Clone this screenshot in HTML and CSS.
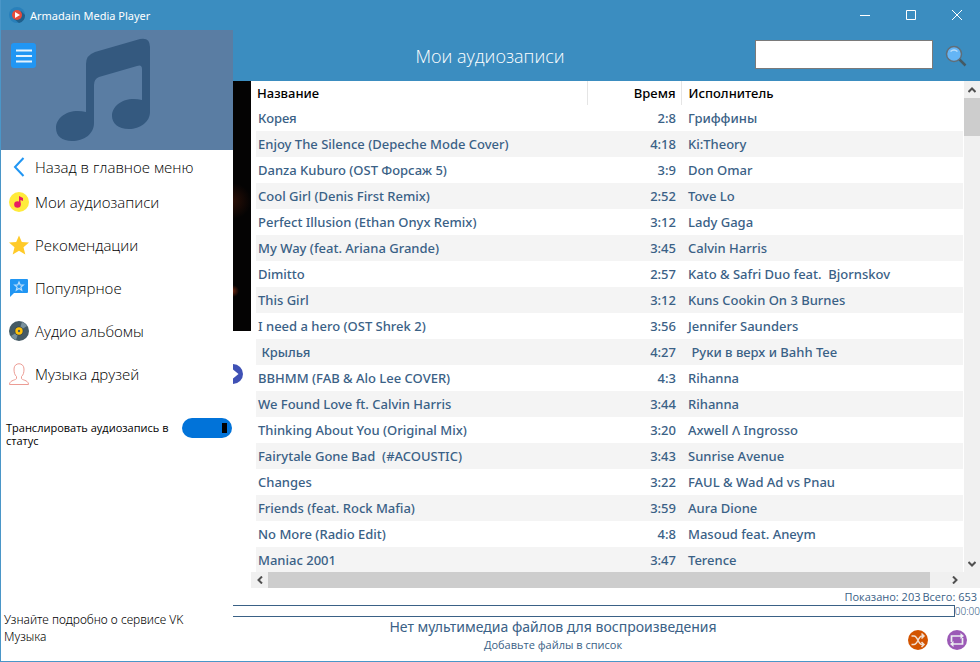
FILE: index.html
```html
<!DOCTYPE html>
<html lang="ru">
<head>
    <meta charset="UTF-8">
    <meta name="viewport" content="width=device-width, initial-scale=1.0">
    <title>Armadain Media Player</title>
    <link rel="stylesheet" href="styles.css">
</head>
<body>
    <div class="window">
        <!-- Title bar -->
        <header class="titlebar">
            <svg class="app-icon" viewBox="0 0 16 16">
                <circle cx="8" cy="8" r="8" fill="#2980ba"/>
                <path d="M5 12L12 4l4 4a8 8 0 0 1-6 8z" fill="#1f5f8b"/>
                <circle cx="8" cy="8" r="5" fill="#e64c3c"/>
                <path d="M6 5l5 3-5 3z" fill="#fff"/>
            </svg>
            <span class="app-name">Armadain Media Player</span>
            <button class="win-button" aria-label="Свернуть"><svg viewBox="0 0 10 10"><path d="M0 5.5h10"/></svg></button>
            <button class="win-button" aria-label="Развернуть"><svg viewBox="0 0 10 10"><path d="M.5.5h9v9h-9z"/></svg></button>
            <button class="win-button" aria-label="Закрыть"><svg viewBox="0 0 10 10"><path d="M0 0l10 10M10 0L0 10"/></svg></button>
        </header>

        <div class="layout">
            <!-- Side menu -->
            <aside class="sidebar">
                <div class="cover">
                    <button class="menu-button" aria-label="Меню">
                        <svg viewBox="0 0 26 26">
                            <rect width="25" height="25" rx="3" fill="#2196f3"/>
                            <path d="M5 7.5h16M5 13h16M5 18.5h16" stroke="#e3f2fd" stroke-width="2"/>
                        </svg>
                    </button>
                    <svg class="note" viewBox="0 0 94 104">
                        <path d="M30 26Q30 17 39 14L84 1Q94-1 94 9V74C94 84 84 91 73 91C62 91 56 85 56 78C56 67 69 58 86 62V31Q86 26 81 28L43 39Q38 41 38 47V85C38 96 28 103 16 103C6 103 0 98 0 90C0 79 13 70 30 74Z" fill="#34597f"/>
                    </svg>
                </div>
                <nav class="menu">
                    <a href="#" class="menu-item back">
                        <svg viewBox="0 0 20 20"><path d="M14.5 1L6 10l8.5 9" fill="none" stroke="#2196f3" stroke-width="2"/></svg>
                        Назад в главное меню
                    </a>
                    <a href="#" class="menu-item">
                        <svg viewBox="0 0 20 20">
                            <circle cx="10" cy="10" r="10" fill="#ffeb3b"/>
                            <circle cx="8.5" cy="12.5" r="3.3" fill="#e91e63"/>
                            <path d="M10 12.5V4l4 2v3l-2.500-1v4.500z" fill="#e91e63"/>
                        </svg>
                        Мои аудиозаписи
                    </a>
                    <a href="#" class="menu-item">
                        <svg viewBox="0 0 20 20"><path d="M10 .5l2.800 6.500 7.200.6-5.500 4.700 1.800 7.200L10 15.700l-6.300 3.800 1.800-7.200L0 7.600 7.200 7z" fill="#ffca28"/></svg>
                        Рекомендации
                    </a>
                    <a href="#" class="menu-item">
                        <svg viewBox="0 0 20 20">
                            <path d="M2 1h16q1 0 1 1v12q0 1-1 1H5l-4 4V2q0-1 1-1z" fill="#2196f3"/>
                            <path d="M10 4l1.200 2.900 3.100.2-2.400 2 .8 3.100-2.700-1.700-2.700 1.700.8-3.100-2.400-2 3.100-.2z" fill="none" stroke="#bbdefb" stroke-width="1.200"/>
                        </svg>
                        Популярное
                    </a>
                    <a href="#" class="menu-item">
                        <svg viewBox="0 0 20 20">
                            <circle cx="10" cy="10" r="10" fill="#455a64"/>
                            <path d="M10 10L13 1a9 9 0 0 1 5 4zM10 10L7 19a9 9 0 0 1-5-4z" fill="#78909c"/>
                            <circle cx="10" cy="10" r="4.500" fill="#37474f"/>
                            <circle cx="10" cy="10" r="3.700" fill="#ffc107"/>
                            <circle cx="10" cy="10" r="1.200" fill="#455a64"/>
                        </svg>
                        Аудио альбомы
                    </a>
                    <a href="#" class="menu-item">
                        <svg viewBox="0 0 20 22"><path d="M7.500 13.500C5.500 12 5 9 5 6c0-7 10-7 10 0 0 3-.5 6-2.500 7.500v2c0 1.500 6.500 1.500 7 5.500v.5H.5V21c.5-4 7-4 7-5.500z" fill="none" stroke="#ec9c94"/></svg>
                        Музыка друзей
                    </a>
                </nav>
                <div class="broadcast">
                    <label for="broadcast">Транслировать аудиозапись в статус</label>
                    <input type="checkbox" id="broadcast" class="switch" checked>
                </div>
                <a href="#" class="about">Узнайте подробно о сервисе VK Музыка</a>
            </aside>

            <main class="content">
                <div class="page-header">
                    <h1>Мои аудиозаписи</h1>
                    <input type="text" class="search-input" aria-label="Поиск">
                    <button class="search-button" aria-label="Найти">
                        <svg viewBox="0 0 22 22">
                            <path d="M14 14l6.500 6.500" stroke="#455a64" stroke-width="2.500"/>
                            <circle cx="9" cy="9" r="7.500" fill="#64b5f6" stroke="#616e78" stroke-width="1.500"/>
                            <path d="M5.500 6.500q3.500-3 7 0" fill="none" stroke="#bbdefb" stroke-width="1.500"/>
                        </svg>
                    </button>
                </div>

                <div class="workspace">
                    <div class="backdrop">
                        <div class="video"></div>
                        <button class="next-button" aria-label="Вперёд">
                            <svg viewBox="0 0 20 20">
                                <circle cx="10" cy="10" r="10" fill="#3f51b5"/>
                                <path d="M3 8.500h7V5.500l5.500 4.500-5.500 4.500v-3H3z" fill="#fff"/>
                            </svg>
                        </button>
                    </div>
                    <div class="tracks">
                        <table>
                            <thead>
                                <tr><th class="name">Название</th><th class="time">Время</th><th class="artist">Исполнитель</th></tr>
                            </thead>
                            <tbody>
                                <tr><td>Корея</td><td>2:8</td><td>Гриффины</td></tr>
                                <tr><td>Enjoy The Silence (Depeche Mode Cover)</td><td>4:18</td><td>Ki:Theory</td></tr>
                                <tr><td>Danza Kuburo (OST Форсаж 5)</td><td>3:9</td><td>Don Omar</td></tr>
                                <tr><td>Cool Girl (Denis First Remix)</td><td>2:52</td><td>Tove Lo</td></tr>
                                <tr><td>Perfect Illusion (Ethan Onyx Remix)</td><td>3:12</td><td>Lady Gaga</td></tr>
                                <tr><td>My Way (feat. Ariana Grande)</td><td>3:45</td><td>Calvin Harris</td></tr>
                                <tr><td>Dimitto</td><td>2:57</td><td>Kato &amp; Safri Duo feat.  Bjornskov</td></tr>
                                <tr><td>This Girl</td><td>3:12</td><td>Kuns Cookin On 3 Burnes</td></tr>
                                <tr><td>I need a hero (OST Shrek 2)</td><td>3:56</td><td>Jennifer Saunders</td></tr>
                                <tr><td> Крылья</td><td>4:27</td><td> Руки в верх и Bahh Tee</td></tr>
                                <tr><td>BBHMM (FAB &amp; Alo Lee COVER)</td><td>4:3</td><td>Rihanna</td></tr>
                                <tr><td>We Found Love ft. Calvin Harris</td><td>3:44</td><td>Rihanna</td></tr>
                                <tr><td>Thinking About You (Original Mix)</td><td>3:20</td><td>Axwell Λ Ingrosso</td></tr>
                                <tr><td>Fairytale Gone Bad  (#ACOUSTIC)</td><td>3:43</td><td>Sunrise Avenue</td></tr>
                                <tr><td>Changes</td><td>3:22</td><td>FAUL &amp; Wad Ad vs Pnau</td></tr>
                                <tr><td>Friends (feat. Rock Mafia)</td><td>3:59</td><td>Aura Dione</td></tr>
                                <tr><td>No More (Radio Edit)</td><td>4:8</td><td>Masoud feat. Aneym</td></tr>
                                <tr><td>Maniac 2001</td><td>3:47</td><td>Terence</td></tr>
                            </tbody>
                        </table>
                    </div>
                    <div class="scroll-y">
                        <button aria-label="Вверх"><svg viewBox="0 0 8 8"><path d="M.5 6L4 2.500 7.500 6"/></svg></button>
                        <div class="thumb"></div>
                        <button aria-label="Вниз"><svg viewBox="0 0 8 8"><path d="M.5 2L4 5.500 7.500 2"/></svg></button>
                    </div>
                    <div class="scroll-x">
                        <button aria-label="Влево"><svg viewBox="0 0 8 8"><path d="M6 .5L2.500 4 6 7.500"/></svg></button>
                        <div class="thumb"></div>
                        <button aria-label="Вправо"><svg viewBox="0 0 8 8"><path d="M2 .5L5.500 4 2 7.500"/></svg></button>
                    </div>
                </div>

                <!-- Player -->
                <footer class="player">
                    <div class="counts"><span>Показано: 203</span> <span>Всего: 653</span></div>
                    <div class="progress">
                        <div class="track"></div>
                        <span class="clock">00:00</span>
                    </div>
                    <div class="now">
                        <div class="message">
                            <p class="message-title">Нет мультимедиа файлов для воспроизведения</p>
                            <p class="message-hint">Добавьте файлы в список</p>
                        </div>
                        <div class="modes">
                            <button aria-label="Перемешать">
                                <svg viewBox="0 0 20 20">
                                    <circle cx="10" cy="10" r="10" fill="#d35400"/>
                                    <path d="M3.500 6H6c4 0 4 8.500 8 8.500h2M3.500 14.500H6c4 0 4-8.500 8-8.500h2M13.500 3.500L16 6l-2.500 2.500M13.500 12l2.500 2.500-2.500 2.500" fill="none" stroke="#f1dfd2" stroke-width="1.500"/>
                                </svg>
                            </button>
                            <button aria-label="Повторять">
                                <svg viewBox="0 0 20 20">
                                    <circle cx="10" cy="10" r="10" fill="#9b59b6"/>
                                    <path d="M4.500 12V6H15M15.500 8v6H5" fill="none" stroke="#ecf0f1" stroke-width="1.700"/>
                                    <path d="M13.500 3l3.500 3-3.500 3zM6.500 11L3 14l3.500 3z" fill="#ecf0f1"/>
                                </svg>
                            </button>
                        </div>
                    </div>
                </footer>
            </main>
        </div>
    </div>
</body>
</html>
```
FILE: styles.css
```css
* {
    box-sizing: border-box;
}
body {
    margin: 0;
    font-family: "Open Sans", "Noto Sans", sans-serif;
    font-size: 13px;
    color: #3a6186;
}
button {
    display: flex;
    align-items: center;
    justify-content: center;
    padding: 0;
    border: none;
    background: none;
    cursor: pointer;
}
a {
    color: #000;
    text-decoration: none;
}
svg {
    display: block;
    flex: none;
}
.window {
    display: flex;
    flex-direction: column;
    height: 100vh;
    border-left: 1px solid #4a96c8;
    border-bottom: 1px solid #4a96c8;
    background: #fff;
    overflow: hidden;
}

/* Title bar */
.titlebar {
    display: flex;
    align-items: center;
    height: 30px;
    flex: none;
    padding-left: 8px;
    background: #3b8dc0;
    color: #fff;
    font-family: "Noto Sans", sans-serif;
    font-size: 11px;
}
.app-icon {
    width: 16px;
    height: 16px;
    margin-right: 5px;
}
.app-name {
    flex: 1;
}
.win-button {
    width: 46px;
    height: 28px;
}
.win-button svg {
    width: 10px;
    height: 10px;
    fill: none;
    stroke: #fff;
}
.layout {
    display: flex;
    flex: 1;
    min-height: 0;
}

/* Side menu */
.sidebar {
    display: flex;
    flex-direction: column;
    width: 232px;
    flex: none;
}
.cover {
    display: flex;
    align-items: flex-start;
    height: 120px;
    flex: none;
    padding: 8px 10px;
    background: #5a7da3;
}
.menu-button {
    margin-top: 5px;
}
.menu-button svg {
    width: 26px;
    height: 26px;
}
.note {
    width: 94px;
    height: 104px;
    margin-left: 19px;
}
.menu-item {
    display: flex;
    align-items: center;
    gap: 6px;
    height: 43px;
    padding-left: 8px;
    font-size: 15px;
    font-weight: 300;
}
.menu-item svg {
    width: 20px;
    height: 22px;
}
.menu-item.back {
    height: 30px;
    padding-top: 4px;
}
.broadcast {
    display: flex;
    align-items: flex-start;
    justify-content: space-between;
    margin-top: 23px;
    padding: 0 1px 0 5px;
    color: #000;
    font-size: 11px;
    line-height: 13px;
}
.broadcast label {
    width: 170px;
    padding-top: 3px;
}
.switch {
    appearance: none;
    display: flex;
    align-items: center;
    justify-content: flex-end;
    width: 50px;
    height: 20px;
    margin: 0;
    padding-right: 5px;
    border-radius: 10px;
    background: #0173d9;
}
.switch::after {
    content: "";
    width: 5px;
    height: 10px;
    background: #000;
}
.about {
    margin-top: auto;
    padding: 0 20px 16px 3px;
    font-family: "Noto Sans", sans-serif;
    font-size: 12px;
    font-weight: 300;
    line-height: 17px;
}

/* Page header */
.content {
    display: flex;
    flex-direction: column;
    flex: 1;
    min-width: 0;
}
.page-header {
    display: flex;
    align-items: center;
    height: 51px;
    flex: none;
    padding-right: 13px;
    background: #3b8dc0;
}
h1 {
    flex: 1;
    margin: 0;
    padding-right: 8px;
    color: #fff;
    font-size: 18px;
    font-weight: 300;
    text-align: center;
}
.search-input {
    width: 178px;
    height: 29px;
    margin-bottom: 2px;
    border: 1px solid #7a7a7a;
    background: #fff;
}
.search-button {
    margin-left: 12px;
}
.search-button svg {
    width: 22px;
    height: 22px;
}

/* Track list */
.workspace {
    display: grid;
    grid-template-columns: 18px 1fr 16px;
    grid-template-rows: 1fr 16px;
    flex: 1;
    min-height: 0;
}
.backdrop {
    grid-row: 1 / 3;
    overflow: hidden;
}
.video {
    height: 250px;
    background: radial-gradient(circle at 0 120px, #2a0f06, transparent 18px), radial-gradient(circle at 0 210px, #6a2610, transparent 6px), #040303;
}
.next-button {
    margin: 33px 0 0 -10px;
}
.next-button svg {
    width: 20px;
    height: 20px;
}
.tracks {
    min-height: 0;
    padding-right: 1px;
    padding-left: 5px;
    overflow: hidden;
}
table {
    width: 100%;
    border-collapse: collapse;
    table-layout: fixed;
    font-family: "Noto Sans", sans-serif;
}
th, td {
    height: 26px;
    padding: 0 6px 0 2px;
    font-weight: 500;
    text-align: left;
    white-space: pre;
}
th {
    height: 24px;
    padding-left: 1px;
    color: #000;
    border-right: 1px solid #e5e5e5;
}
.name {
    width: 331px;
}
.time {
    width: 94px;
}
.artist {
    border-right: none;
}
td:nth-child(2), .time {
    padding-right: 5px;
    text-align: right;
}
td:nth-child(3), .artist {
    padding-left: 7px;
}
tbody tr:nth-child(even) {
    background: #f4f4f4;
}
.scroll-y, .scroll-x {
    display: flex;
    background: #f0f0f0;
}
.scroll-y {
    flex-direction: column;
}
.scroll-x {
    grid-column: 2 / 4;
    padding-right: 17px;
}
.scroll-y button, .scroll-x button {
    width: 17px;
    height: 16px;
    flex: none;
}
.scroll-y button {
    width: 16px;
    height: 17px;
}
.scroll-y svg, .scroll-x svg {
    width: 8px;
    height: 8px;
    fill: none;
    stroke: #505050;
    stroke-width: 2;
}
.thumb {
    background: #cdcdcd;
}
.scroll-y .thumb {
    height: 38px;
}
.scroll-x .thumb {
    width: 93%;
}
.scroll-y button:last-child {
    margin-top: auto;
}
.scroll-x button:last-child {
    margin-left: auto;
}

/* Player */
.player {
    flex: none;
    height: 73px;
    font-family: "Noto Sans", sans-serif;
}
.counts {
    display: flex;
    justify-content: flex-end;
    gap: 2px;
    height: 17px;
    padding-right: 3px;
    font-family: "Open Sans", sans-serif;
    font-size: 11px;
    line-height: 18px;
}
.progress {
    display: flex;
    align-items: center;
    height: 12px;
}
.track {
    flex: 1;
    height: 12px;
    border: 1px solid #3a6186;
    border-left: none;
}
.clock {
    font-size: 10px;
    font-weight: 300;
}
.now {
    display: flex;
}
.message {
    flex: 1;
    text-align: center;
}
.message p {
    margin: 0;
}
.message-title {
    font-size: 14px;
    line-height: 20px;
}
.message-hint {
    font-family: "Open Sans", sans-serif;
    font-size: 11px;
    line-height: 16px;
}
.modes {
    display: flex;
    align-items: flex-start;
    gap: 19px;
    padding: 13px 13px 0 35px;
}
.modes svg {
    width: 20px;
    height: 20px;
}
```
